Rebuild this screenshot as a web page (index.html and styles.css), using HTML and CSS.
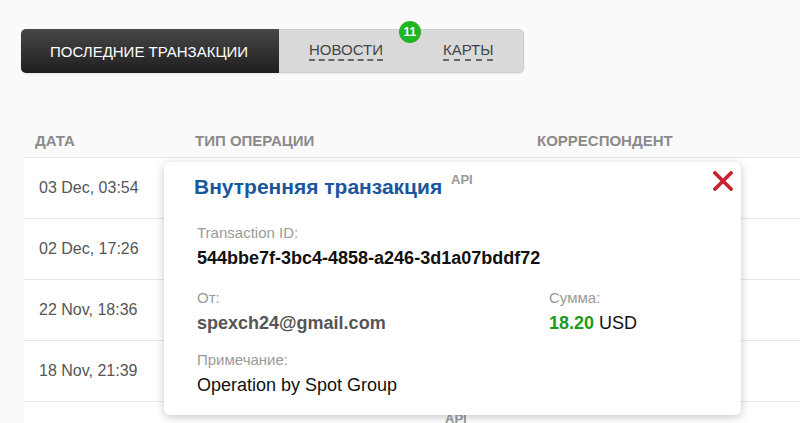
FILE: index.html
```html
<!DOCTYPE html>
<html lang="ru">
<head>
    <meta charset="UTF-8">
    <title>Транзакции</title>
    <link rel="stylesheet" href="styles.css">
</head>
<body>
    <div class="page">
        <div class="tabs">
            <div class="tab active">ПОСЛЕДНИЕ ТРАНЗАКЦИИ</div>
            <div class="tab"><span class="link">НОВОСТИ</span><span class="badge">11</span></div>
            <div class="tab"><span class="link">КАРТЫ</span></div>
        </div>

        <div class="table">
            <div class="row head">
                <div class="c-date">ДАТА</div>
                <div class="c-type">ТИП ОПЕРАЦИИ</div>
                <div class="c-corr">КОРРЕСПОНДЕНТ</div>
            </div>
            <div class="row">
                <div class="c-date">03 Dec, 03:54</div>
                <div class="c-type"></div>
            </div>
            <div class="row">
                <div class="c-date">02 Dec, 17:26</div>
                <div class="c-type"></div>
            </div>
            <div class="row">
                <div class="c-date">22 Nov, 18:36</div>
                <div class="c-type"></div>
            </div>
            <div class="row">
                <div class="c-date">18 Nov, 21:39</div>
                <div class="c-type"></div>
            </div>
            <div class="row">
                <div class="c-date"></div>
                <div class="c-type"><span class="api-low">API</span></div>
            </div>
        </div>

        <div class="modal">
            <svg class="close" width="20" height="20" viewBox="0 0 20 20">
                <path d="M2 2 L18 18 M18 2 L2 18" stroke="#c8202c" stroke-width="3.6" stroke-linecap="square"/>
            </svg>
            <h3 class="modal-title">Внутренняя транзакция <sup class="api">API</sup></h3>
            <div class="field">
                <div class="label">Transaction ID:</div>
                <div class="value strong">544bbe7f-3bc4-4858-a246-3d1a07bddf72</div>
            </div>
            <div class="field-grid">
                <div class="field">
                    <div class="label">От:</div>
                    <div class="value strong gray">spexch24@gmail.com</div>
                </div>
                <div class="field">
                    <div class="label">Сумма:</div>
                    <div class="value"><span class="amount">18.20</span> USD</div>
                </div>
            </div>
            <div class="field">
                <div class="label">Примечание:</div>
                <div class="value">Operation by Spot Group</div>
            </div>
        </div>
    </div>
</body>
</html>
```

FILE: styles.css
```css
* {
    margin: 0;
    padding: 0;
    box-sizing: border-box;
}
body {
    background: #fafafa;
    font-family: "Liberation Sans", Arial, sans-serif;
    color: #222;
    overflow: hidden;
}
.page {
    position: relative;
    padding: 29px 0 0 21px;
}
.tabs {
    display: inline-flex;
    height: 44px;
    background: #d9d9d9;
    border: 1px solid #cdcdcd;
    border-radius: 5px;
    box-shadow: 0 1px 2px rgba(0, 0, 0, 0.08);
}
.tab {
    position: relative;
    display: flex;
    align-items: center;
    padding: 0 30px;
    font-size: 15px;
    color: #444;
}
.tab.active {
    width: 258px;
    margin: -1px 0 -1px -1px;
    padding: 0 0 0 29px;
    background: linear-gradient(#474747, #1f1f1f);
    color: #fff;
    border-radius: 5px 0 0 5px;
}
.link {
    line-height: 18px;
    border-bottom: 2px dashed #666;
}
.badge {
    position: absolute;
    top: -9px;
    right: -8px;
    width: 22px;
    height: 22px;
    border-radius: 50%;
    background: #22b522;
    color: #fff;
    font-size: 12px;
    font-weight: bold;
    line-height: 22px;
    text-align: center;
}
.table {
    margin: 49px 0 0 3px;
    background: #fff;
}
.row {
    display: flex;
    height: 61px;
    align-items: center;
    border-bottom: 1px solid #e6e6e6;
    font-size: 16px;
    color: #555;
}
.row.head {
    height: 36px;
    padding-top: 1px;
    font-size: 15px;
    font-weight: bold;
    color: #8a8a8a;
    background: #fafafa;
}
.c-date {
    width: 171px;
    padding-left: 15px;
}
.head .c-date {
    padding-left: 11px;
}
.c-type {
    width: 342px;
}
.api-low {
    display: inline-block;
    margin: 0 0 0 250px;
    font-size: 13px;
    font-weight: bold;
    color: #999;
    transform: translateY(-14px);
}
.modal {
    position: absolute;
    top: 162px;
    left: 164px;
    width: 577px;
    height: 253px;
    padding: 5px 30px 0 33px;
    background: #fff;
    border-radius: 6px;
    box-shadow: 0 2px 10px rgba(0, 0, 0, 0.22);
}
.close {
    position: absolute;
    top: 9px;
    right: 8px;
}
.modal-title {
    margin-left: -3px;
    font-size: 21px;
    line-height: 26px;
    color: #1b579c;
}
.api {
    margin-left: 3px;
    font-size: 13px;
    color: #999;
    vertical-align: 10px;
}
.field {
    margin-bottom: 20px;
}
.field-grid .field {
    margin-bottom: 17px;
}
.modal-title + .field {
    margin-top: 24px;
}
.field-grid {
    display: grid;
    grid-template-columns: 352px 1fr;
}
.label {
    font-size: 15px;
    line-height: 18px;
    color: #9a9a9a;
    margin-bottom: 5px;
}
.value {
    font-size: 18px;
    line-height: 22px;
    color: #111;
}
.strong {
    font-weight: bold;
}
.gray {
    color: #555;
}
.amount {
    font-weight: bold;
    color: #1e9a1e;
}
```
